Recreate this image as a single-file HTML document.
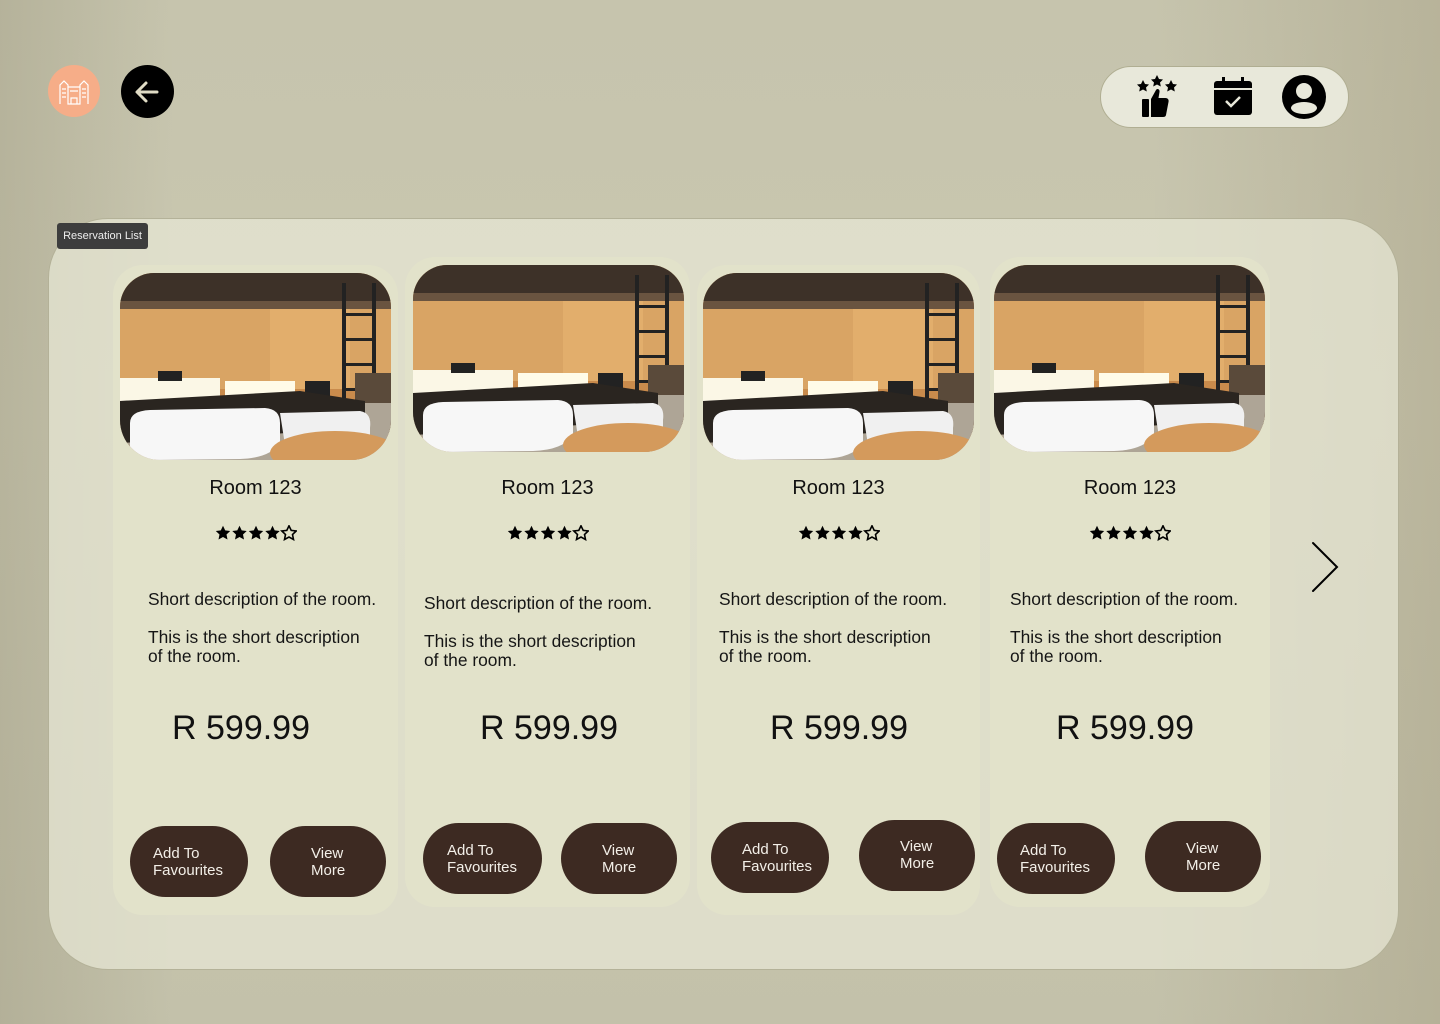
<!DOCTYPE html>
<html><head><meta charset="utf-8"><style>
*{margin:0;padding:0;box-sizing:border-box}
body{width:1440px;height:1024px;overflow:hidden;position:relative;font-family:"Liberation Sans",sans-serif;
background:linear-gradient(180deg,#c6c4ad 0%,#c9c7b0 40%,#c3c1aa 100%);}
.bgs{position:absolute;inset:0;background:
linear-gradient(90deg,rgba(150,145,120,.35) 0,rgba(0,0,0,0) 12%,rgba(0,0,0,0) 80%,rgba(150,140,110,.3) 100%);}
.panel{position:absolute;left:48px;top:218px;width:1351px;height:752px;border-radius:60px;background:rgba(232,232,214,.72);border:1px solid rgba(170,168,140,.8)}
.tag{position:absolute;left:57px;top:223px;width:91px;height:26px;background:#3d3d3d;border-radius:3px;color:#eee;font-size:11px;line-height:26px;text-align:center}
.card{position:absolute;width:285px;height:650px;background:#e2e2ca;border-radius:30px}
.img{position:absolute;left:7px;top:8px;width:271px;height:187px;border-radius:34px 34px 40px 40px;overflow:hidden}
.t{position:absolute;left:0;width:100%;text-align:center;font-size:20px;color:#111}
.st{position:absolute;left:50%;margin-left:-41px;width:82px;height:16px}
.d{position:absolute;font-size:17.4px;color:#151515;line-height:19px;white-space:nowrap}
.p{position:absolute;font-size:34px;color:#111}
.b{position:absolute;height:71px;border-radius:36px;background:#3d2a22;color:#f3efe8;font-size:15px;line-height:17px;padding-top:19px}
</style></head><body>
<svg width="0" height="0" style="position:absolute"><defs>
<path id="s" d="M8 .8l2.2 4.6 5 .6-3.7 3.5 1 5-4.5-2.5-4.5 2.5 1-5L.8 6l5-.6z"/>
<symbol id="stars" viewBox="0 0 82 16">
<use href="#s" x="0" fill="#000"/><use href="#s" x="16.5" fill="#000"/><use href="#s" x="33" fill="#000"/><use href="#s" x="49.5" fill="#000"/>
<use href="#s" x="66" fill="none" stroke="#000" stroke-width="1.6"/>
</symbol>
<symbol id="room" viewBox="0 0 271 187">
<rect width="271" height="187" fill="#c98b4c"/>
<rect width="271" height="28" fill="#3d3128"/>
<rect y="28" width="271" height="8" fill="#6a5440"/>
<rect y="36" width="271" height="80" fill="#d9a464"/>
<rect x="150" y="36" width="80" height="80" fill="#e2ae6c"/>
<rect x="0" y="105" width="100" height="30" fill="#fbf7e6"/>
<rect x="105" y="108" width="70" height="25" fill="#fffbe8"/>
<rect x="38" y="98" width="24" height="10" fill="#222"/>
<rect x="185" y="108" width="25" height="20" fill="#222"/>
<rect x="222" y="10" width="4" height="140" fill="#222"/><rect x="252" y="10" width="4" height="140" fill="#222"/>
<g fill="#222"><rect x="222" y="40" width="34" height="3"/><rect x="222" y="65" width="34" height="3"/><rect x="222" y="90" width="34" height="3"/><rect x="222" y="115" width="34" height="3"/></g>
<rect x="235" y="100" width="36" height="60" fill="#5a4a3a"/>
<rect y="130" width="271" height="57" fill="#aea596"/>
<path d="M0 128 L180 118 L245 128 L245 155 L90 165 L0 170z" fill="#2a2520"/>
<path d="M10 150 Q10 138 30 137 L145 135 Q160 136 160 150 L160 170 Q150 185 120 186 L30 187 Q10 186 10 175z" fill="#f7f7f7"/>
<path d="M160 140 L240 138 Q252 140 250 155 L250 165 L165 172z" fill="#f0f0f0"/>
<ellipse cx="215" cy="180" rx="65" ry="22" fill="#d49a5c"/>
</symbol></defs></svg>
<div class="bgs"></div>
<div style="position:absolute;left:48px;top:65px;width:52px;height:52px;border-radius:50%;background:#f6ad88"></div>
<svg style="position:absolute;left:58px;top:77px" width="32" height="28" viewBox="0 0 32 28" fill="none" stroke="#fff" stroke-width="1.2"><path d="M2 27V8l4-4 4 4v19M22 27V8l4-4 4 4v19M10 10h12v17H10zM13 27v-6h6v6M4 12h4M4 16h4M4 20h4M24 12h4M24 16h4M24 20h4M12 14h8"/></svg>
<div style="position:absolute;left:121px;top:65px;width:53px;height:53px;border-radius:50%;background:#000"></div>
<svg style="position:absolute;left:133px;top:78px" width="28" height="28" viewBox="0 0 28 28" fill="none" stroke="#e0dcc5" stroke-width="3" stroke-linecap="round" stroke-linejoin="round"><path d="M24 14H5M13 5l-9 9 9 9"/></svg>
<div style="position:absolute;left:1100px;top:66px;width:249px;height:62px;border-radius:31px;background:#e8e8da;border:1px solid #b0ae92"></div>
<svg style="position:absolute;left:1135px;top:74px" width="44" height="44" viewBox="0 0 44 44" fill="#000"><path d="M8 6l2 4 4 .5-3 3 .8 4-3.8-2-3.8 2 .8-4-3-3 4-.5zM22 1l2 4 4 .5-3 3 .8 4-3.8-2-3.8 2 .8-4-3-3 4-.5zM36 6l2 4 4 .5-3 3 .8 4-3.8-2-3.8 2 .8-4-3-3 4-.5z"/><rect x="7" y="25" width="7" height="18" rx="1"/><path d="M16 25l5-9c1-2 4-1 3.5 2l-1 6h7c2.5 0 3.5 2 3 4l-2.5 13c-.3 1.5-1.5 2-3 2H16z"/></svg>
<svg style="position:absolute;left:1213px;top:76px" width="40" height="40" viewBox="0 0 40 40"><rect x="1" y="5" width="38" height="34" rx="3" fill="#000"/><rect x="9" y="1" width="3" height="8" fill="#000"/><rect x="28" y="1" width="3" height="8" fill="#000"/><rect x="1" y="12" width="38" height="2" fill="#e8e8da"/><path d="M13 25l5 5 9-9" stroke="#e8e8da" stroke-width="2.5" fill="none"/></svg>
<svg style="position:absolute;left:1281px;top:74px" width="46" height="46" viewBox="0 0 46 46"><circle cx="23" cy="23" r="22" fill="#000"/><circle cx="23" cy="17" r="8" fill="#e8e8da"/><ellipse cx="23" cy="34" rx="13" ry="6" fill="#e8e8da"/></svg>
<div class="panel"></div>
<div class="tag">Reservation List</div>

<div class="card" style="left:113px;top:265px">
<svg class="img"><use href="#room"/></svg><div class="t" style="top:212px">Room 123</div><svg class="st" style="top:260px"><use href="#stars"/></svg>
<div class="d" style="left:35px;top:325px">Short description of the room.<br><br>This is the short description<br>of the room.</div>
<div class="p" style="left:59px;top:444px">R 599.99</div>
<div class="b" style="left:17px;top:561px;width:118px;padding-left:23px">Add To<br>Favourites</div>
<div class="b" style="left:157px;top:561px;width:116px;padding-left:41px">View<br>More</div></div>

<div class="card" style="left:405px;top:257px">
<svg class="img" style="top:8px;left:8px"><use href="#room"/></svg><div class="t" style="top:220px">Room 123</div><svg class="st" style="top:268px"><use href="#stars"/></svg>
<div class="d" style="left:19px;top:337px">Short description of the room.<br><br>This is the short description<br>of the room.</div>
<div class="p" style="left:75px;top:452px">R 599.99</div>
<div class="b" style="left:18px;top:566px;width:119px;padding-left:24px">Add To<br>Favourites</div>
<div class="b" style="left:156px;top:566px;width:116px;padding-left:41px">View<br>More</div></div>

<div class="card" style="left:697px;top:265px;width:283px">
<svg class="img" style="left:6px"><use href="#room"/></svg><div class="t" style="top:212px">Room 123</div><svg class="st" style="top:260px"><use href="#stars"/></svg>
<div class="d" style="left:22px;top:325px">Short description of the room.<br><br>This is the short description<br>of the room.</div>
<div class="p" style="left:73px;top:444px">R 599.99</div>
<div class="b" style="left:14px;top:557px;width:118px;padding-left:31px">Add To<br>Favourites</div>
<div class="b" style="left:162px;top:555px;width:116px;padding-left:41px;padding-top:18px">View<br>More</div></div>

<div class="card" style="left:990px;top:257px;width:280px">
<svg class="img" style="left:4px;top:8px"><use href="#room"/></svg><div class="t" style="top:220px">Room 123</div><svg class="st" style="top:268px"><use href="#stars"/></svg>
<div class="d" style="left:20px;top:333px">Short description of the room.<br><br>This is the short description<br>of the room.</div>
<div class="p" style="left:66px;top:452px">R 599.99</div>
<div class="b" style="left:7px;top:566px;width:118px;padding-left:23px">Add To<br>Favourites</div>
<div class="b" style="left:155px;top:564px;width:116px;padding-left:41px">View<br>More</div></div>

<svg style="position:absolute;left:1308px;top:540px" width="34" height="54" viewBox="0 0 34 54" fill="none" stroke="#000" stroke-width="2" stroke-linecap="round"><path d="M5 3l24 24L5 51"/></svg>
</body></html>
